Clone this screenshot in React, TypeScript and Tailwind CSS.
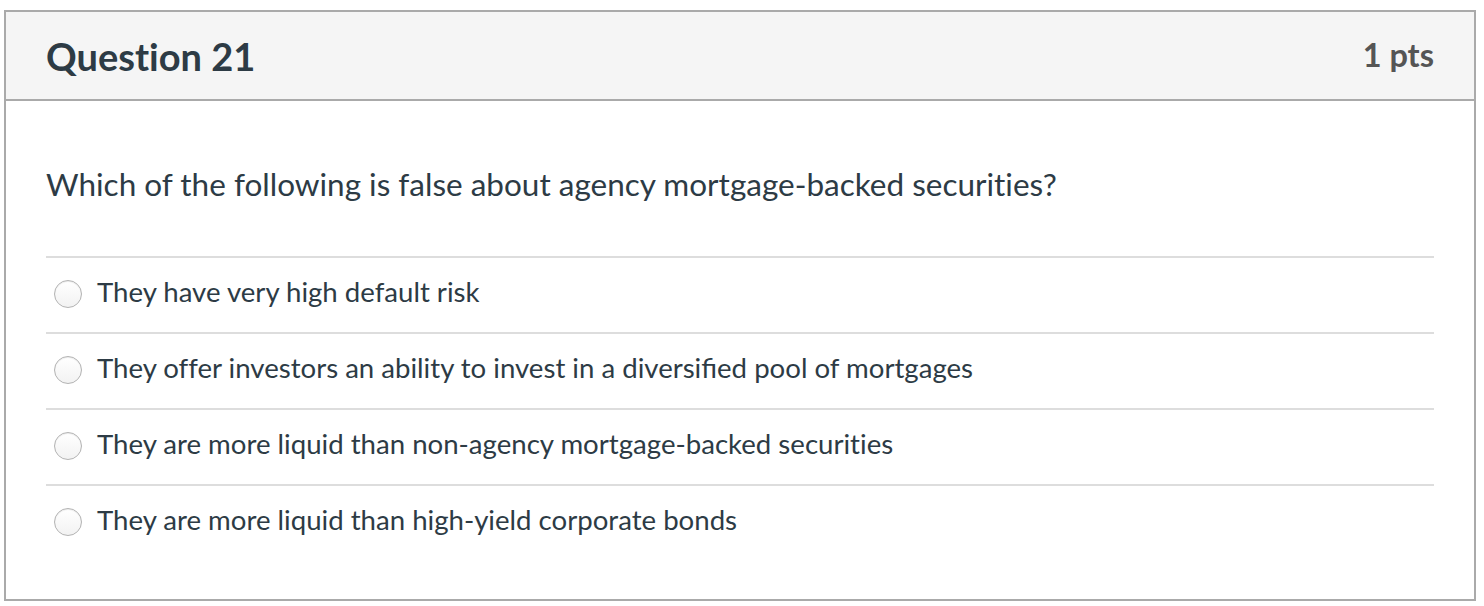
import type { ReactNode } from "react";

const options: { key: string; label: ReactNode }[] = [
  { key: "a", label: "They have very high default risk" },
  {
    key: "b",
    label: (
      <>
        They offer investors an ability to invest in a{" "}
        <span className="[font-variant-ligatures:common-ligatures]">diversified</span> pool of
        mortgages
      </>
    ),
  },
  { key: "c", label: "They are more liquid than non-agency mortgage-backed securities" },
  { key: "d", label: "They are more liquid than high-yield corporate bonds" },
];

export default function App() {
  return (
    <div className="min-h-[606px] bg-white pl-1 pt-[10px] font-['Lato',sans-serif] text-[#2d3b45] [font-variant-ligatures:none]">
      <div className="flex h-[591px] w-[1472px] flex-col border-2 border-[#aaaaaa]">
        <div className="flex h-[89px] shrink-0 items-center justify-between border-b-2 border-[#aaaaaa] bg-[#f5f5f5] px-10">
          <h2 className="text-[38px] font-bold leading-none">Question 21</h2>
          <span className="text-[32.5px] font-bold leading-none text-[#555555]">1 pts</span>
        </div>
        <div className="px-10 pt-[63px]">
          <p className="text-[31.5px] leading-[40px]">
            Which of the following is false about agency mortgage-backed securities?
          </p>
          <div className="mt-[52px]">
            {options.map((o) => (
              <label
                key={o.key}
                className="flex h-[76px] items-center gap-[15px] border-t-2 border-[#dddddd] pb-[2px] pl-2"
              >
                <span className="h-[28px] w-[28px] shrink-0 rounded-full border border-[#b3b3b3] bg-gradient-to-b from-white to-[#f2f2f2] shadow-[inset_0_1px_1px_rgba(0,0,0,0.08)]" />
                <span className="pb-[4px] text-[27.6px] leading-none">{o.label}</span>
              </label>
            ))}
          </div>
        </div>
      </div>
    </div>
  );
}
